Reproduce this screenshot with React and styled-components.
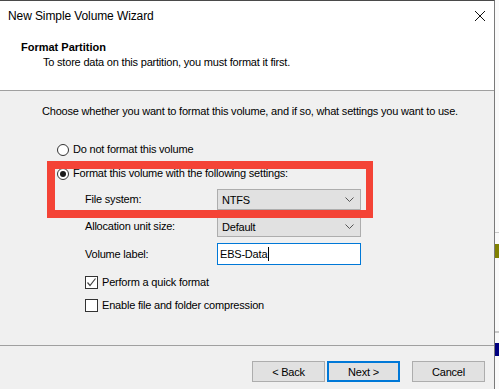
import React from 'react';
import styled, { createGlobalStyle } from 'styled-components';

const GlobalStyle = createGlobalStyle`
  html, body {
    margin: 0;
    padding: 0;
    width: 499px;
    height: 389px;
    overflow: hidden;
    background: #ffffff;
  }
  body {
    font-family: 'Liberation Sans', Arial, sans-serif;
    font-size: 11px;
    letter-spacing: -0.2px;
    color: #000;
  }
`;

const Screen = styled.div`
  width: 499px;
  height: 389px;
  display: flex;
  overflow: hidden;
`;

const Window = styled.div`
  width: 495px;
  height: 389px;
  flex: none;
  display: flex;
  flex-direction: column;
  background: #f0f0f0;
  border-right: 1px solid #7a7a7a;
  border-top: 1px solid #4a4a4a;
  box-sizing: border-box;
`;

const Side = styled.div`
  flex: 1;
  display: flex;
  flex-direction: column;
  background: #fafafa;
`;

const SideBit = styled.div`
  height: ${({ $h }) => $h}px;
  flex: none;
  background: ${({ $color }) => $color};
`;

const Top = styled.div`
  height: 89px;
  flex: none;
  background: #fff;
  border-bottom: 1px solid #a0a0a0;
  display: flex;
  flex-direction: column;
`;

const TitleBar = styled.div`
  height: 29px;
  display: flex;
  align-items: center;
  justify-content: space-between;
  padding: 0 7px 0 8px;
  font-size: 12px;
  letter-spacing: -0.1px;
`;

const Close = styled.div`
  width: 12px;
  height: 12px;
  display: flex;
  margin-right: 1px;
`;

const Header = styled.div`
  display: flex;
  flex-direction: column;
  padding: 11px 0 0 21px;
`;

const HeaderTitle = styled.div`
  font-weight: 700;
  line-height: 13px;
  letter-spacing: 0;
`;

const HeaderSub = styled.div`
  line-height: 13px;
  margin: 2px 0 0 22px;
`;

const Body = styled.div`
  position: relative;
  height: 255px;
  flex: none;
  border-bottom: 1px solid #a0a0a0;
  display: flex;
  flex-direction: column;
  padding: 14px 0 0 42px;
  box-sizing: border-box;
`;

const Intro = styled.div`
  line-height: 13px;
  margin-bottom: 25px;
`;

const Options = styled.div`
  display: flex;
  flex-direction: column;
  gap: 11px;
  margin-left: 15px;
`;

const Choice = styled.label`
  display: flex;
  align-items: center;
  gap: 4px;
  height: 13px;
  line-height: 13px;
`;

const Radio = styled.span`
  width: 12px;
  height: 12px;
  border: 1px solid #333;
  border-radius: 50%;
  background: #fff;
  box-sizing: border-box;
  display: flex;
  align-items: center;
  justify-content: center;
  &::after {
    content: '';
    width: 6px;
    height: 6px;
    border-radius: 50%;
    background: ${({ $checked }) => ($checked ? '#1a1a1a' : 'transparent')};
  }
`;

const Fields = styled.div`
  display: grid;
  grid-template-columns: 132px 144px;
  row-gap: 6px;
  margin: 9px 0 0 43px;
  align-items: center;
`;

const FieldLabel = styled.div`
  line-height: 13px;
`;

const Select = styled.div`
  height: 21px;
  border: 1px solid #adadad;
  background: #e1e1e1;
  box-sizing: border-box;
  display: flex;
  align-items: center;
  justify-content: space-between;
  padding: 0 6px 0 4px;
`;

const TextInput = styled.div`
  height: 22px;
  border: 1px solid #0078d7;
  background: #fff;
  box-sizing: border-box;
  display: flex;
  align-items: center;
  padding-left: 2px;
`;

const Caret = styled.span`
  width: 1px;
  height: 14px;
  background: #000;
  margin-left: 1px;
`;

const Checks = styled.div`
  display: flex;
  flex-direction: column;
  gap: 10px;
  margin: 11px 0 0 43px;
`;

const CheckBox = styled.span`
  width: 13px;
  height: 13px;
  border: 1px solid #333;
  background: #fff;
  box-sizing: border-box;
  display: flex;
  align-items: center;
  justify-content: center;
`;

const Highlight = styled.div`
  position: absolute;
  left: 47px;
  top: 70px;
  width: 326px;
  height: 57px;
  border: 8px solid #f44336;
  border-right-width: 7px;
  box-sizing: border-box;
  pointer-events: none;
`;

const Buttons = styled.div`
  display: flex;
  padding: 15px 0 0 252px;
`;

const Button = styled.div`
  width: 73px;
  height: 21px;
  box-sizing: border-box;
  background: #e1e1e1;
  border: ${({ $primary }) => ($primary ? '2px solid #0078d7' : '1px solid #adadad')};
  display: flex;
  align-items: center;
  justify-content: center;
  margin-left: ${({ $gap }) => $gap || 0}px;
`;

const Chevron = () => (
  <svg width="9" height="5" viewBox="0 0 9 5">
    <path d="M0.5 0.5 L4.5 4.5 L8.5 0.5" fill="none" stroke="#555" strokeWidth="1" />
  </svg>
);

const Check = () => (
  <svg width="11" height="11" viewBox="0 0 11 11">
    <path d="M1.5 5.5 L4 8.5 L9.5 1.5" fill="none" stroke="#444" strokeWidth="1.2" />
  </svg>
);

const CloseIcon = () => (
  <svg width="12" height="12" viewBox="0 0 12 12">
    <path d="M1 1 L11 11 M11 1 L1 11" stroke="#111" strokeWidth="1" />
  </svg>
);

function App() {
  return (
    <>
      <GlobalStyle />
      <Screen>
        <Window>
          <Top>
            <TitleBar>
              <span>New Simple Volume Wizard</span>
              <Close>
                <CloseIcon />
              </Close>
            </TitleBar>
            <Header>
              <HeaderTitle>Format Partition</HeaderTitle>
              <HeaderSub>To store data on this partition, you must format it first.</HeaderSub>
            </Header>
          </Top>

          <Body>
            <Intro>
              Choose whether you want to format this volume, and if so, what settings you want to use.
            </Intro>
            <Options>
              <Choice>
                <Radio />
                Do not format this volume
              </Choice>
              <Choice>
                <Radio $checked />
                Format this volume with the following settings:
              </Choice>
            </Options>

            <Fields>
              <FieldLabel>File system:</FieldLabel>
              <Select>
                NTFS
                <Chevron />
              </Select>
              <FieldLabel>Allocation unit size:</FieldLabel>
              <Select>
                Default
                <Chevron />
              </Select>
              <FieldLabel>Volume label:</FieldLabel>
              <TextInput>
                EBS-Data
                <Caret />
              </TextInput>
            </Fields>

            <Checks>
              <Choice>
                <CheckBox>
                  <Check />
                </CheckBox>
                Perform a quick format
              </Choice>
              <Choice>
                <CheckBox />
                Enable file and folder compression
              </Choice>
            </Checks>

            <Highlight />
          </Body>

          <Buttons>
            <Button>&lt; Back</Button>
            <Button $primary $gap={2}>Next &gt;</Button>
            <Button $gap={12}>Cancel</Button>
          </Buttons>
        </Window>

        <Side>
          <SideBit $h={232} $color="#fafafa" />
          <SideBit $h={1} $color="#c8c8c8" />
          <SideBit $h={11} $color="#fafafa" />
          <SideBit $h={14} $color="#808000" />
          <SideBit $h={73} $color="#fafafa" />
          <SideBit $h={2} $color="#c8c8c8" />
          <SideBit $h={10} $color="#fafafa" />
          <SideBit $h={13} $color="#000080" />
        </Side>
      </Screen>
    </>
  );
}

export default App;
